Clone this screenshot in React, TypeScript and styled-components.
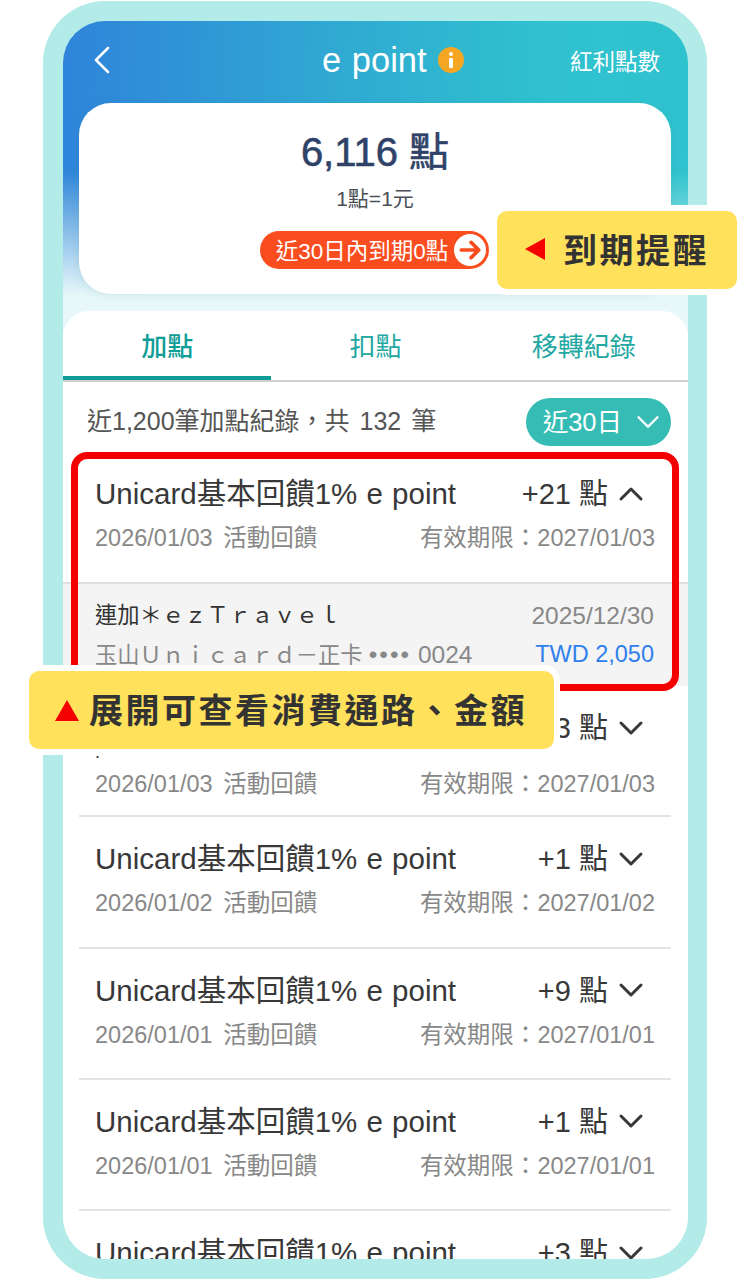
import { ChevronDown, ChevronLeft, ChevronUp } from "lucide-react";
import { createGlobalStyle, styled } from "styled-components";

const GlobalStyle = createGlobalStyle`
  body {
    margin: 0;
    background: #fff;
    font-family: "Liberation Sans", "Noto Sans CJK TC", sans-serif;
  }
`;

const Page = styled.div`
  position: relative;
  width: 750px;
  height: 1280px;
  overflow: hidden;
  padding: 1px 43px;
  box-sizing: border-box;
`;

const Frame = styled.div`
  width: 664px;
  height: 1278px;
  box-sizing: border-box;
  padding: 20px;
  border-radius: 62px;
  background: #b3ebe9;
`;

const Screen = styled.div`
  width: 625px;
  height: 1238px;
  overflow: hidden;
  border-radius: 42px;
  background:
    linear-gradient(to bottom, rgba(232, 248, 249, 0) 150px, #e8f8f9 275px),
    linear-gradient(92deg, #2f84da 0%, #30aad2 42%, #2fc1cf 72%, #2fc3ce 100%);
`;

const Header = styled.header`
  display: flex;
  align-items: center;
  height: 82px;
  padding: 0 28px 4px 15px;
  box-sizing: border-box;
  color: #fff;
`;

const HeaderTitle = styled.div`
  display: flex;
  align-items: center;
  gap: 11px;
  margin-left: 196px;
  font-size: 34.5px;
  line-height: 40px;
  word-spacing: 1px;
`;

const InfoDot = styled.span`
  display: flex;
  align-items: center;
  justify-content: center;
  width: 26px;
  height: 26px;
  border-radius: 50%;
  background: #f6a623;
`;

const HeaderLink = styled.div`
  margin-left: auto;
  font-size: 22.5px;
`;

const SummaryCard = styled.section`
  display: flex;
  flex-direction: column;
  align-items: center;
  height: 191px;
  margin: 0 17px 17px 16px;
  border-radius: 32px;
  background: #fff;
  box-shadow: 0 2px 8px rgba(60, 120, 130, 0.12);
`;

const Total = styled.div`
  margin-top: 18px;
  font-size: 40px;
  line-height: 62px;
  color: #2f4268;
  -webkit-text-stroke: 0.6px #2f4268;
`;

const Rate = styled.div`
  margin-top: 1px;
  font-size: 21px;
  line-height: 30px;
  color: #4a4f57;
`;

const ExpireBadge = styled.div`
  display: flex;
  align-items: center;
  gap: 6px;
  height: 38px;
  box-sizing: border-box;
  margin: 17px 0 0 -1px;
  padding: 0 3px 3px 16px;
  border-radius: 19px;
  background: #f94d1f;
  color: #fff;
  font-size: 22.5px;
`;

const ArrowDot = styled.span`
  display: flex;
  align-items: center;
  justify-content: center;
  width: 32px;
  height: 32px;
  margin-top: 3px;
  border-radius: 50%;
  background: #fff;
`;

const Panel = styled.section`
  border-radius: 26px 26px 0 0;
  background: #fff;
`;

const Tabs = styled.nav`
  display: grid;
  grid-template-columns: repeat(3, 1fr);
  height: 71px;
  box-sizing: border-box;
  border-bottom: 2px solid #cfcfcf;
`;

const Tab = styled.div<{ $active?: boolean }>`
  height: 69px;
  box-sizing: border-box;
  padding-top: 16px;
  text-align: center;
  font-size: 26px;
  line-height: 40px;
  font-weight: ${(props) => (props.$active ? 500 : 400)};
  color: ${(props) => (props.$active ? "#0f9d98" : "#21a8a2")};
  border-bottom: ${(props) => (props.$active ? "4px solid #0f9d98" : "none")};
`;

const FilterRow = styled.div`
  display: flex;
  align-items: center;
  justify-content: space-between;
  height: 70px;
  padding: 10px 17px 0 24px;
  box-sizing: border-box;
  font-size: 25px;
  word-spacing: 3px;
  color: #555;
`;

const FilterLabel = styled.span`
  margin-bottom: 6px;
`;

const FilterPill = styled.div`
  display: flex;
  align-items: center;
  gap: 7px;
  height: 48px;
  padding: 0 4px 0 17px;
  border-radius: 24px;
  background: #35bdb5;
  color: #fff;
  font-size: 25.5px;
`;

const Row = styled.div<{ $open?: boolean }>`
  height: ${(props) => (props.$open ? 130 : 131.33)}px;
  box-sizing: border-box;
  margin: 0 17px 0 16px;
  padding: 17px 16px 0;
  border-bottom: ${(props) => (props.$open ? "none" : "2px solid #e4e4e4")};
`;

const RowTop = styled.div`
  display: flex;
  align-items: center;
  justify-content: space-between;
  height: 44px;
  font-size: 29.5px;
  word-spacing: 1px;
  color: #383838;
`;

const Points = styled.div`
  display: flex;
  align-items: center;
  gap: 3px;
  margin-right: 4px;
  word-spacing: 0;
  font-size: 29px;
`;

const OpenChevron = styled(ChevronUp)`
  margin-top: 5px;
`;

const ClosedChevron = styled(ChevronDown)`
  margin-top: 5px;
`;

const Stray = styled.div`
  height: 12px;
  font-size: 18px;
  line-height: 10px;
  color: #333;
`;

const RowBottom = styled.div`
  display: flex;
  justify-content: space-between;
  margin-top: 8px;
  font-size: 23.5px;
  line-height: 34px;
  word-spacing: 4px;
  color: #888;
`;

const Detail = styled.div`
  height: 104px;
  box-sizing: border-box;
  padding: 12px 34px 0 32px;
  background: #f4f4f4;
  border-top: 2px solid #dedede;
`;

const DetailLine = styled.div`
  display: flex;
  justify-content: space-between;
  font-size: 22.3px;
  line-height: 39px;
  color: #888;
`;

const Merchant = styled.span`
  color: #333;
`;

const DetailDate = styled.span`
  font-size: 24.5px;
`;

const CardNumber = styled.span`
  font-size: 24.5px;
`;

const Bullets = styled.span`
  letter-spacing: 2px;
`;

const Amount = styled.span`
  font-size: 23.5px;
  color: #2f80ed;
`;

const RedFrame = styled.div`
  position: absolute;
  left: 71px;
  top: 452px;
  width: 608px;
  height: 239px;
  box-sizing: border-box;
  border: 7px solid #f50000;
  border-radius: 16px;
`;

const Callout = styled.div<{ $left: number; $top: number; $width: number }>`
  position: absolute;
  left: ${(props) => props.$left}px;
  top: ${(props) => props.$top}px;
  width: ${(props) => props.$width}px;
  height: 78px;
  display: flex;
  align-items: center;
  box-sizing: border-box;
  padding-bottom: 3px;
  border-radius: 10px;
  background: #ffe15c;
  box-shadow: 0 0 0 6px #fff;
  color: #333;
  font-size: 34px;
  font-weight: 700;
  letter-spacing: 2.5px;
  white-space: nowrap;
`;

const ArrowLeft = styled.span`
  width: 0;
  height: 0;
  margin: 0 18px 0 28px;
  border-style: solid;
  border-width: 11px 20px 11px 0;
  border-color: transparent #f50000 transparent transparent;
`;

const ArrowUp = styled.span`
  width: 0;
  height: 0;
  margin: 3px 10px 0 26px;
  border-style: solid;
  border-width: 0 12px 21px;
  border-color: transparent transparent #f50000;
`;

interface RecordItem {
  date: string;
  expiry: string;
  points: number;
}

const records: RecordItem[] = [
  { date: "2026/01/02", expiry: "2027/01/02", points: 1 },
  { date: "2026/01/01", expiry: "2027/01/01", points: 9 },
  { date: "2026/01/01", expiry: "2027/01/01", points: 1 },
  { date: "2026/01/01", expiry: "2027/01/01", points: 3 },
];

const TITLE = "Unicard基本回饋1% e point";

export default function App() {
  return (
    <Page>
      <GlobalStyle />
      <Frame>
        <Screen>
          <Header>
            <ChevronLeft size={48} strokeWidth={1.25} />
            <HeaderTitle>
              e point
              <InfoDot>
                <svg width="6" height="16" viewBox="0 0 6 16">
                  <circle cx="3" cy="2" r="2" fill="#fff" />
                  <rect x="1" y="6" width="4" height="10" rx="1" fill="#fff" />
                </svg>
              </InfoDot>
            </HeaderTitle>
            <HeaderLink>紅利點數</HeaderLink>
          </Header>

          <SummaryCard>
            <Total>6,116 點</Total>
            <Rate>1點=1元</Rate>
            <ExpireBadge>
              近30日內到期0點
              <ArrowDot>
                <svg width="24" height="24" viewBox="0 0 22 22" fill="none" stroke="#f94d1f" strokeWidth="3.4" strokeLinecap="round" strokeLinejoin="round">
                  <path d="M3 11h15M12 4l7 7-7 7" />
                </svg>
              </ArrowDot>
            </ExpireBadge>
          </SummaryCard>

          <Panel>
            <Tabs>
              <Tab $active>加點</Tab>
              <Tab>扣點</Tab>
              <Tab>移轉紀錄</Tab>
            </Tabs>

            <FilterRow>
              <FilterLabel>近1,200筆加點紀錄，共 132 筆</FilterLabel>
              <FilterPill>
                <FilterLabel>近30日</FilterLabel>
                <ChevronDown size={38} strokeWidth={1.5} />
              </FilterPill>
            </FilterRow>

            <Row $open>
              <RowTop>
                {TITLE}
                <Points>
                  +21 點
                  <OpenChevron size={40} strokeWidth={1.8} />
                </Points>
              </RowTop>
              <RowBottom>
                <span>2026/01/03 活動回饋</span>
                <span>有效期限：2027/01/03</span>
              </RowBottom>
            </Row>
            <Detail>
              <DetailLine>
                <Merchant>連加＊ｅｚＴｒａｖｅｌ</Merchant>
                <DetailDate>2025/12/30</DetailDate>
              </DetailLine>
              <DetailLine>
                <span>
                  玉山Ｕｎｉｃａｒｄ－正卡{" "}
                  <CardNumber>
                    <Bullets>••••</Bullets> 0024
                  </CardNumber>
                </span>
                <Amount>TWD 2,050</Amount>
              </DetailLine>
            </Detail>

            <Row>
              <RowTop>
                {TITLE}
                <Points>
                  +3 點
                  <ClosedChevron size={40} strokeWidth={1.8} />
                </Points>
              </RowTop>
              <Stray>.</Stray>
              <RowBottom>
                <span>2026/01/03 活動回饋</span>
                <span>有效期限：2027/01/03</span>
              </RowBottom>
            </Row>

            {records.map((record, index) => (
              <Row key={index}>
                <RowTop>
                  {TITLE}
                  <Points>
                    +{record.points} 點
                    <ClosedChevron size={40} strokeWidth={1.8} />
                  </Points>
                </RowTop>
                <RowBottom>
                  <span>{record.date} 活動回饋</span>
                  <span>有效期限：{record.expiry}</span>
                </RowBottom>
              </Row>
            ))}
          </Panel>
        </Screen>
      </Frame>

      <RedFrame />
      <Callout $left={497} $top={211} $width={240}>
        <ArrowLeft />
        到期提醒
      </Callout>
      <Callout $left={29} $top={671} $width={525}>
        <ArrowUp />
        展開可查看消費通路、金額
      </Callout>
    </Page>
  );
}
